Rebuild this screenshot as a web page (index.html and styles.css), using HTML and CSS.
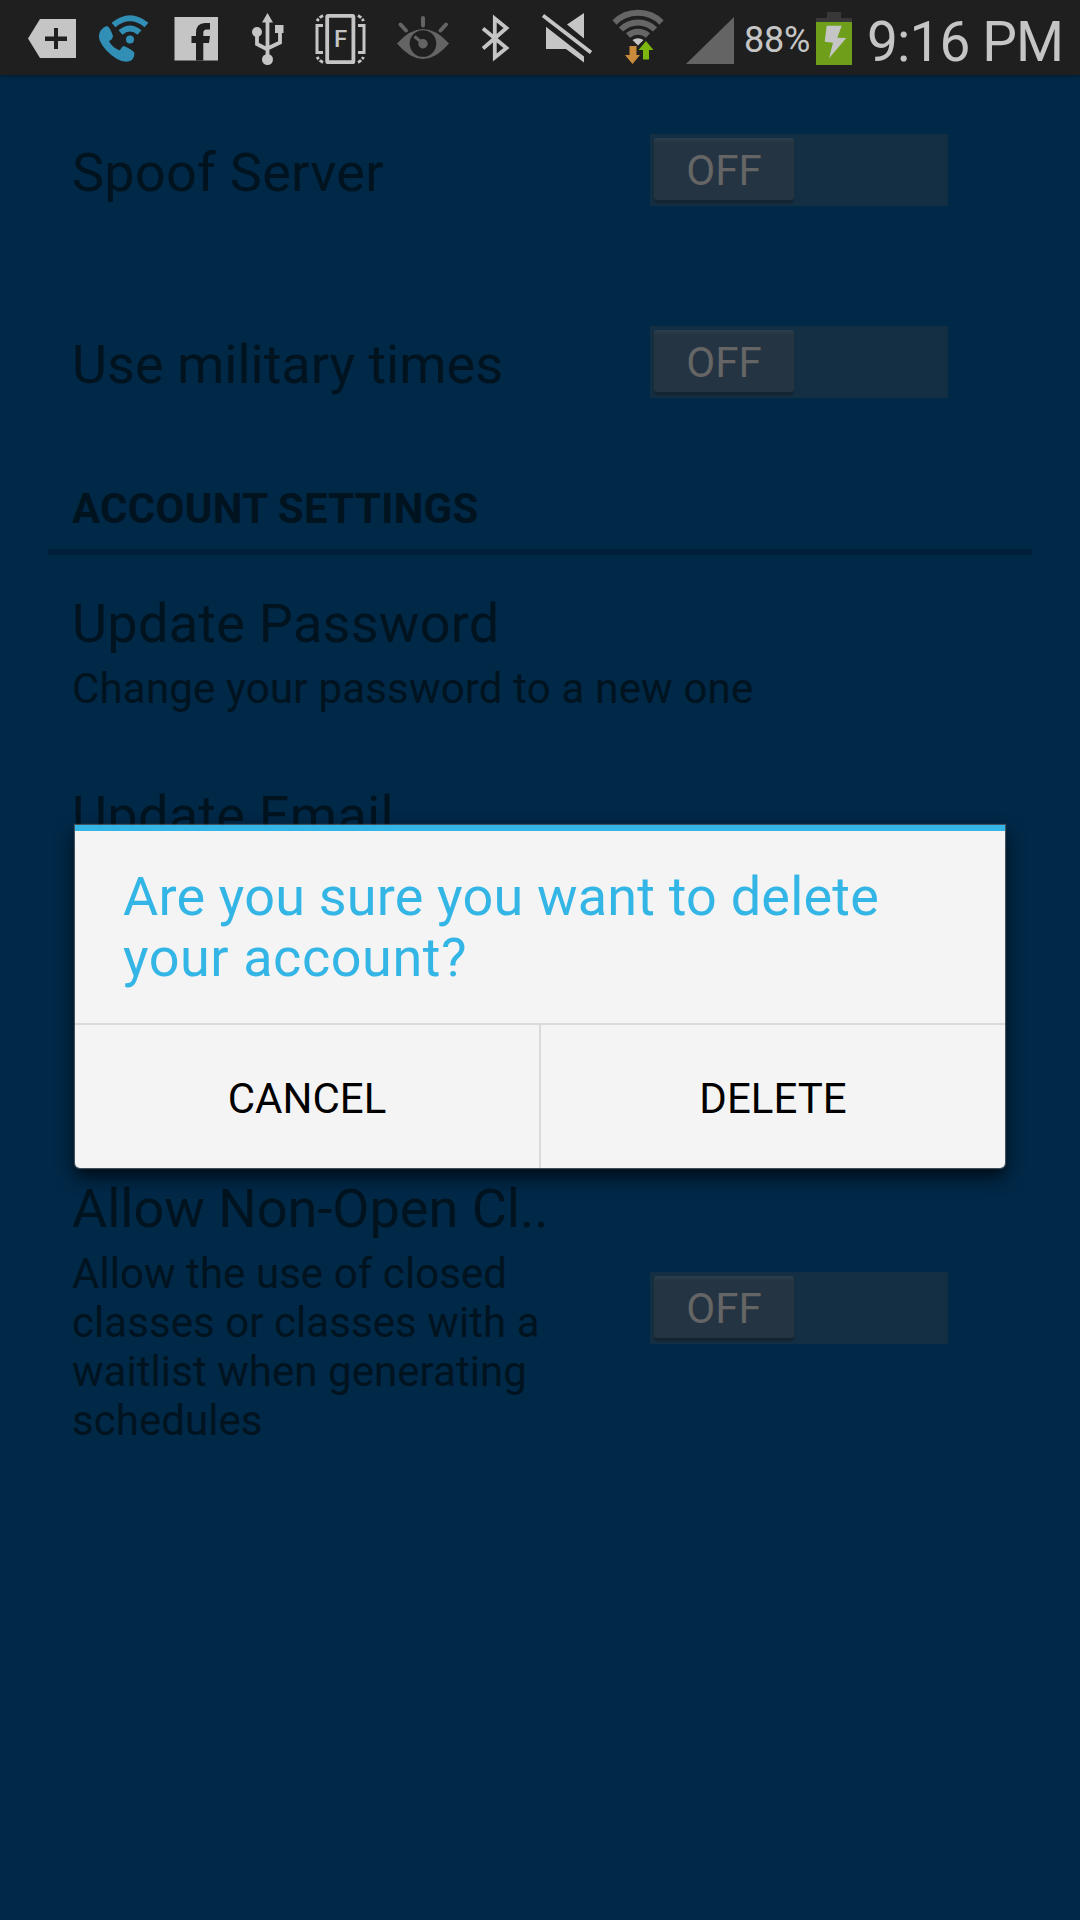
FILE: index.html
```
<!DOCTYPE html>
<html lang="en">
<head>
<meta charset="utf-8">
<title>Settings</title>
<link rel="stylesheet" href="styles.css">
</head>
<body>
<div class="screen">
  <header class="status">
    <svg width="90" height="75" viewBox="0 0 90 75"><path class="light" d="M28 38.5 40 19H76V58H40Z"/><path class="ink" d="M45 36.5h9V28h4v8.500h9v4.500h-9v8h-4v-8h-9z"/></svg>
    <svg width="70" height="75" viewBox="90 0 70 75"><path class="blue" d="M101 30Q104 26.500 107 26Q110 27 113 36Q112.500 40 109 41Q112 47.500 120 50.500Q121.500 46.500 124 46Q133 50 134.500 53Q134.500 57 132 60Q126 64 117 59Q104 51 99.500 40Q98 34 101 30Z"/><circle class="blue" cx="130" cy="39.500" r="4"/><path class="blue-line" d="M120.500 32.500Q130 24.500 139.500 32.500M113.500 25Q130 11.500 146.500 25"/></svg>
    <svg width="80" height="75" viewBox="160 0 80 75"><path class="light" d="M174.500 17H218V60.500H174.500Z"/><path class="ink" d="M196 60.500V43H191.500V36H196V33Q196 23 205 23H210V29.500H206.500Q203.300 29.500 203.300 33V36H210L209 43H203.300V60.500Z"/></svg>
    <svg width="60" height="75" viewBox="240 0 60 75"><path class="light" d="M267.500 13 273 22.500H262ZM275 25h8.500v8h-8.500z"/><circle class="light" cx="267.500" cy="59.500" r="5.500"/><circle class="light" cx="257" cy="32" r="5"/><path class="line4" d="M267.500 20V58M257 34V44L267.500 49.500M280 31V42.500L267.500 48.500"/></svg>
    <svg width="80" height="75" viewBox="300 0 80 75"><rect class="line4" x="327.200" y="15.800" width="26.200" height="46.400" rx="1"/><path class="line3" d="M323 25.500H317V52.500H323M358 25.500H364V52.500H358M317 21Q319 17.500 323 15.500M358 15.500Q362 17.500 363.500 21M317 57Q319 60.500 323 62.500M358 62.500Q362 60.500 363.500 57" /><path class="gap" d="M318 17l3 3M363 17l-3 3M318 61l3-3M363 61l-3-3"/><text class="profile" x="334" y="46.500">F</text></svg>
    <svg width="85" height="75" viewBox="380 0 85 75"><path class="gray" d="M397 43.500Q410 29 423 29T449 43.500Q436 59 423 59T397 43.500Z"/><circle class="ink" cx="423" cy="43.500" r="13.300"/><circle class="gray" cx="423" cy="43.800" r="4.700"/><path class="gray-line" d="M423 18V25.500M400.500 24.500 406 30.500M446 24.500 440.500 30.500"/><path class="gray-thin" d="M414.500 36.500 420 41"/></svg>
    <svg width="55" height="75" viewBox="465 0 55 75"><path class="line4" d="M483 28.500 506.500 48 494.800 57.500V18.500L506.500 28 483 48.500"/></svg>
    <svg width="85" height="75" viewBox="520 0 85 75"><path class="light" d="M567 24.500 584 13V38.500ZM546 26.700 584 56.500V62.500L566 49H546Z"/><path class="line4" d="M543 15.500 591 52.500"/></svg>
    <svg width="70" height="75" viewBox="605 0 70 75"><path class="wifi" d="M614.500 22.500A33.500 33.500 0 0 1 661.500 22.500M621 29.500A24 24 0 0 1 655 29.500M628 35.500A15 15 0 0 1 648 35.500"/><path class="light" d="M632.500 40Q638 36.500 643.500 40L638 45.500Z"/><path class="orange" d="M629.500 46H636.500V55H640L632.500 64 625 55H629.500Z"/><path class="green" d="M643 59.500H649V50H653.500L646 41 638.500 50H643Z"/></svg>
    <svg width="67" height="75" viewBox="675 0 67 75"><path class="gray" d="M686 64 734 17V64Z"/></svg>
    <span class="percent">88%</span>
    <svg width="50" height="75" viewBox="810 0 50 75"><path class="cap" d="M816 22.500V18H827V12H841V18H852V22.500Z"/><path class="charge" d="M816 22H852V65H816Z"/><path class="light" d="M826.700 25.700H841.700L837.300 37.700 846.300 38 829 58.300 833 42.700 824.700 41.700Z"/></svg>
    <span class="clock">9:16 PM</span>
  </header>

  <main class="settings">
    <div class="row row-single"><div class="title spaced">Spoof Server</div><div class="toggle"><span class="thumb">OFF</span></div></div>
    <div class="row row-single"><div class="title">Use military times</div><div class="toggle"><span class="thumb">OFF</span></div></div>
    <h2 class="section">ACCOUNT SETTINGS</h2>
    <div class="row"><div><div class="title spaced">Update Password</div><div class="summary spaced">Change your password to a new one</div></div></div>
    <div class="row"><div><div class="title spaced">Update Email</div></div></div>
    <div class="row"></div>
    <div class="row row-long">
      <div><div class="title">Allow Non-Open Cl..</div><div class="summary">Allow the use of closed<br>classes or classes with a<br>waitlist when generating<br>schedules</div></div>
      <div class="toggle"><span class="thumb">OFF</span></div>
    </div>
  </main>

  <section class="dialog">
    <h1 class="question">Are you sure you want to delete<br><span class="question-end">your account?</span></h1>
    <div class="actions"><button class="action">CANCEL</button><button class="action">DELETE</button></div>
  </section>
</div>
</body>
</html>
```
FILE: styles.css
```
* { box-sizing: border-box; }
body { margin: 0; background: #002847; font-family: Roboto, sans-serif; }
.screen { position: relative; width: 1080px; height: 1920px; overflow: hidden; background: #002847; }

.status { display: flex; height: 75px; background: #1f1f1f; color: #c5c5c5; box-shadow: 0 1px 3px rgba(0,0,0,.35); }
.status svg { flex: none; display: block; }
.light { fill: #c5c5c5; }
.ink { fill: #1f1f1f; }
.blue { fill: #318eb5; }
.blue-line { fill: none; stroke: #318eb5; stroke-width: 6; }
.gray { fill: #646464; }
.gray-line { fill: none; stroke: #646464; stroke-width: 4; stroke-linecap: round; }
.gray-thin { stroke: #646464; stroke-width: 3; }
.line3 { fill: none; stroke: #c5c5c5; stroke-width: 3; }
.line4 { fill: none; stroke: #c5c5c5; stroke-width: 3.8; }
.gap { stroke: #1f1f1f; stroke-width: 1.5; }
.profile { fill: #c5c5c5; font-size: 24px; font-weight: 500; }
.wifi { fill: none; stroke: #666; stroke-width: 6; }
.orange { fill: #c98a3c; }
.green { fill: #7cb70f; }
.cap { fill: #383838; }
.charge { fill: #6f9f1a; }
.percent { flex: none; width: 68px; padding: 19px 0 0 2px; font-size: 36px; letter-spacing: -.2px; line-height: 42px; white-space: nowrap; }
.clock { flex: none; padding: 10px 0 0 7px; font-size: 55px; letter-spacing: -.9px; line-height: 64px; white-space: nowrap; }

.settings { color: #00131f; }
.row { display: flex; justify-content: space-between; height: 192px; padding: 38px 132px 0 72px; }
.row-single { height: 191.5px; padding-top: 67px; }
.row-single .toggle { margin-top: -8px; }
.row-long { height: 356px; padding-top: 47px; }
.row-long .toggle { margin-top: 94px; }
.title { font-size: 54px; line-height: 61px; white-space: nowrap; }
.summary { margin-top: 10px; font-size: 42px; letter-spacing: .06px; line-height: 49px; white-space: nowrap; }
.title.spaced { letter-spacing: .28px; }
.summary.spaced { letter-spacing: .19px; }
.section { height: 97px; margin: 0 48px; padding: 26px 24px 0; border-bottom: 6px solid #00203a; font-size: 42px; letter-spacing: .25px; line-height: 49px; font-weight: 700; white-space: nowrap; }
.toggle { flex: none; width: 298px; height: 72px; padding: 4px; background: #142f43; }
.thumb { display: block; width: 140px; height: 62px; border-radius: 3px; background: #253442; box-shadow: inset 0 3px 2px #2b3d4a, 0 3px 2px #132330; color: #656565; font-size: 42px; line-height: 66px; text-align: center; }

.dialog { position: absolute; left: 75px; top: 825px; width: 930px; height: 343px; border-top: 6px solid #33b5e5; border-radius: 0 0 5px 5px; background: #f4f4f4; box-shadow: 0 0 1px 1px rgba(120,130,135,.6), 0 8px 18px rgba(0,0,0,.75); }
.question { height: 192px; margin: 0; padding: 35px 48px 0; color: #33b5e5; font-size: 54px; letter-spacing: .19px; line-height: 61px; font-weight: 400; white-space: nowrap; }
.question-end { letter-spacing: .55px; }
.actions { display: grid; grid-template-columns: 464px 466px; height: 145px; border-top: 2px solid #dadada; }
.action { border: 0; padding: 3px 0 0; background: transparent; color: #000; font-family: inherit; font-size: 42px; line-height: 49px; }
.action + .action { border-left: 2px solid #dadada; }
```
